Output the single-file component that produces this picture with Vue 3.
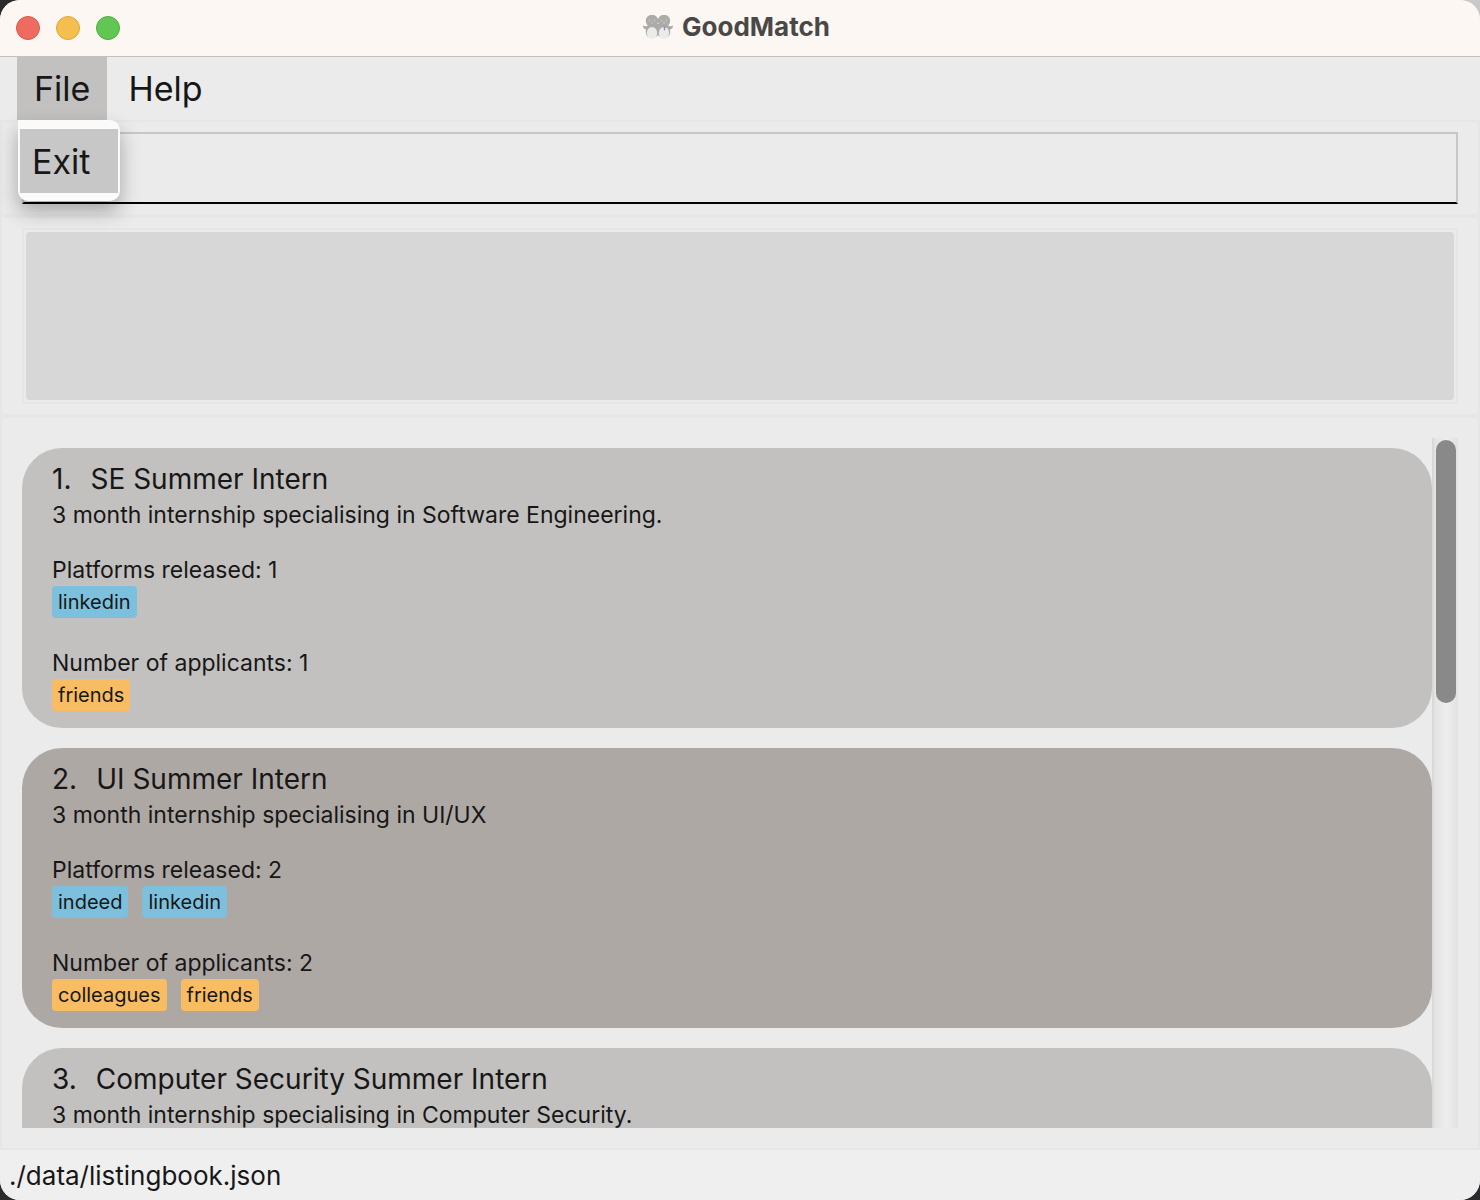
<script setup>
import { ref } from 'vue'

const listings = [
  {
    title: 'SE Summer Intern',
    description: '3 month internship specialising in Software Engineering.',
    platforms: ['linkedin'],
    applicants: ['friends'],
  },
  {
    title: 'UI Summer Intern',
    description: '3 month internship specialising in UI/UX',
    platforms: ['indeed', 'linkedin'],
    applicants: ['colleagues', 'friends'],
  },
  {
    title: 'Computer Security Summer Intern',
    description: '3 month internship specialising in Computer Security.',
  },
]

const command = ref('')
const result = ref('')
const menuOpen = ref(true)
</script>

<template>
  <div class="window">
    <header class="titlebar">
      <div class="lights">
        <button class="light close" type="button" aria-label="Close"></button>
        <button class="light minimise" type="button" aria-label="Minimise"></button>
        <button class="light zoom" type="button" aria-label="Zoom"></button>
      </div>
      <h1 class="app-title">
        <svg class="logo" viewBox="0 0 30 24" width="30" height="24" aria-hidden="true">
          <g fill="#acabaa">
            <circle cx="9" cy="6" r="6.200" />
            <circle cx="21" cy="6" r="6.200" />
            <path d="M0 10.500 Q2 11.500 4 11 Q6 9 9 9 H21 Q24 9 26 11 Q28 11.500 30 10.500 Q30 14 27 14.500 Q28 19 25 22 L17 22 L15 20 L13 22 L5 22 Q2 19 3 14.500 Q0 14 0 10.500 Z" />
          </g>
          <ellipse cx="9" cy="18" rx="5.200" ry="6" fill="#ecebea" />
          <ellipse cx="21" cy="18" rx="5.200" ry="6" fill="#ecebea" />
          <g fill="#c4c3c2">
            <circle cx="6.500" cy="5.500" r="1" />
            <circle cx="11.500" cy="5.500" r="1" />
            <circle cx="18.500" cy="5.500" r="1" />
            <circle cx="23.500" cy="5.500" r="1" />
          </g>
          <path d="M7.700 7.200 h2.600 l-1.300 2 z M19.700 7.200 h2.600 l-1.300 2 z" fill="#e3bf85" />
          <path d="M20.700 11.500 h1.600 v2.500 l-0.800 2 l-0.800 -2 z" fill="#8888c8" />
        </svg>
        GoodMatch
      </h1>
    </header>

    <nav class="menubar">
      <div class="menu">
        <button class="menu-button" :class="{ open: menuOpen }" type="button" @click="menuOpen = !menuOpen">File</button>
        <div v-if="menuOpen" class="popup">
          <button class="popup-item" type="button">Exit</button>
        </div>
      </div>
      <button class="menu-button" type="button">Help</button>
    </nav>

    <section class="pane">
      <input v-model="command" class="command" type="text" aria-label="Command" />
    </section>

    <section class="pane">
      <div class="result-frame">
        <textarea v-model="result" class="result" readonly aria-label="Result"></textarea>
      </div>
    </section>

    <main class="pane list-pane">
      <ol class="list">
        <li v-for="(item, i) in listings" :key="item.title" class="card">
          <h2 class="card-title"><span>{{ i + 1 }}.</span><span>{{ item.title }}</span></h2>
          <p class="line">{{ item.description }}</p>
          <template v-if="item.platforms">
            <p class="line platforms">Platforms released: {{ item.platforms.length }}</p>
            <div class="tags">
              <span v-for="p in item.platforms" :key="p" class="tag platform">{{ p }}</span>
            </div>
          </template>
          <template v-if="item.applicants">
            <p class="line applicants">Number of applicants: {{ item.applicants.length }}</p>
            <div class="tags">
              <span v-for="a in item.applicants" :key="a" class="tag applicant">{{ a }}</span>
            </div>
          </template>
        </li>
      </ol>
      <div class="track">
        <div class="thumb"></div>
      </div>
    </main>

    <footer class="status">./data/listingbook.json</footer>
  </div>
</template>

<style>
body {
  background: linear-gradient(#c9c9c9, #c9c9c9) top right / 50% 60px no-repeat, #2b2b2d;
}
</style>

<style scoped>
.window {
  display: flex;
  flex-direction: column;
  height: 100vh;
  border-radius: 20px;
  overflow: hidden;
  background: #ebebeb;
  color: #171717;
  font-family: Inter, "Liberation Sans", sans-serif;
}

button {
  margin: 0;
  padding: 0;
  border: 0;
  background: none;
  color: inherit;
  font: inherit;
}

.titlebar {
  display: grid;
  grid-template-columns: 1fr auto 1fr;
  align-items: center;
  flex: none;
  height: 56px;
  padding: 0 16px;
  border-bottom: 1px solid #c3c1c0;
  background: #fcf7f3;
}

.lights {
  display: flex;
  gap: 16px;
}

.light {
  width: 24px;
  height: 24px;
  border: 1px solid;
  border-radius: 50%;
}

.close {
  background: #ed6b5f;
  border-color: #d9574b;
}

.minimise {
  background: #f5bf4f;
  border-color: #dba53c;
}

.zoom {
  background: #61c654;
  border-color: #4fac42;
}

.app-title {
  display: flex;
  align-items: center;
  gap: 9px;
  margin: 0 7px 2px 0;
  color: #4a4846;
  font-size: 26px;
  line-height: 32px;
  font-weight: 700;
}

.logo {
  display: block;
}

.menubar {
  display: flex;
  gap: 4px;
  flex: none;
  height: 63px;
  padding-left: 17px;
}

.menu {
  position: relative;
}

.menu-button {
  height: 63px;
  padding: 0 17px;
  font-size: 34px;
}

.menu-button.open {
  background: #c2c1bf;
}

.popup {
  position: absolute;
  z-index: 2;
  top: 63px;
  left: 1px;
  padding: 9px 2px 8px;
  border-radius: 0 10px 10px 10px;
  background: #fafafa;
  box-shadow: 0 10px 20px rgba(0, 0, 0, 0.3);
}

.popup-item {
  display: block;
  height: 64px;
  padding: 0 28px 0 12px;
  background: #c7c7c7;
  font-size: 34px;
}

.pane {
  box-sizing: border-box;
  flex: none;
  padding: 10px 20px;
  border: 2px solid #e6e6e6;
}

.command {
  display: block;
  box-sizing: border-box;
  width: 100%;
  height: 72px;
  padding: 0 12px;
  border: 2px solid #c6c6c6;
  border-bottom-color: #000;
  outline: 0;
  background: transparent;
  color: inherit;
  font: inherit;
  font-size: 34px;
}

.result-frame {
  padding: 2px;
  border: 2px solid #e6e6e6;
}

.result {
  display: block;
  box-sizing: border-box;
  width: 100%;
  height: 168px;
  padding: 8px 12px;
  border: 0;
  border-radius: 4px;
  outline: 0;
  background: #d7d7d7;
  color: inherit;
  font: inherit;
  font-size: 23px;
  resize: none;
}

.list-pane {
  display: flex;
  flex: 1 1 0;
  min-height: 0;
  padding: 20px;
}

.list {
  flex: 1;
  margin: 0;
  padding: 0;
  overflow: hidden;
  list-style: none;
}

.card {
  box-sizing: border-box;
  min-height: 280px;
  margin: 10px 0 20px;
  padding: 12px 30px 17px;
  border-radius: 40px;
  background: #c2c1bf;
}

.card:nth-child(even) {
  background: #aea8a5;
}

.card-title {
  display: flex;
  gap: 19px;
  margin: 0;
  font-size: 28px;
  line-height: 39px;
  font-weight: 400;
}

.line {
  margin: 0;
  font-size: 23px;
  line-height: 32px;
}

.platforms {
  margin-top: 23px;
}

.applicants {
  margin-top: 29px;
}

.tags {
  display: flex;
  gap: 14px;
}

.tag {
  padding: 1px 6px 0;
  border-radius: 4px;
  font-size: 20px;
  line-height: 31px;
}

.platform {
  background: #7dc0dd;
}

.applicant {
  background: #f8bc63;
}

.track {
  box-sizing: border-box;
  width: 26px;
  padding: 2px;
  border-left: 2px solid #d9d9d9;
  background: linear-gradient(to right, #e2e2e2, #ededed 50%, #e2e2e2);
}

.thumb {
  height: 38.4%;
  border-radius: 10px;
  background: #898989;
}

.status {
  flex: none;
  padding: 8px 9px 6px;
  background: #efefef;
  font-size: 26px;
  line-height: 36px;
}
</style>
